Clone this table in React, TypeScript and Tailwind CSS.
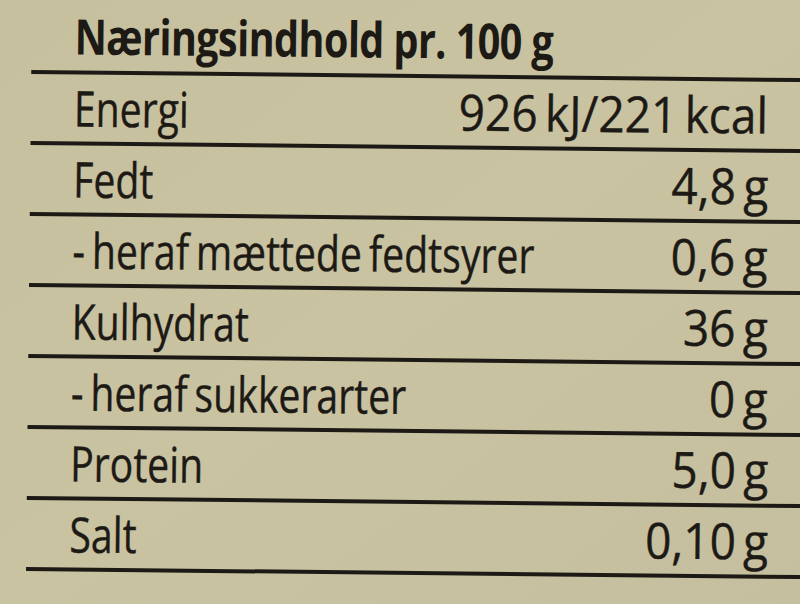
import React from 'react';

const ROWS: { label: string; value: string }[] = [
    { label: 'Energi', value: '926 kJ/221 kcal' },
    { label: 'Fedt', value: '4,8 g' },
    { label: '- heraf mættede fedtsyrer', value: '0,6 g' },
    { label: 'Kulhydrat', value: '36 g' },
    { label: '- heraf sukkerarter', value: '0 g' },
    { label: 'Protein', value: '5,0 g' },
    { label: 'Salt', value: '0,10 g' },
];

const App: React.FC = () => {
    return (
        <div
            className="w-[800px] h-[604px] overflow-hidden bg-gradient-to-br from-[#c6c09f] via-[#c9c3a2] to-[#c5bf9f] text-[#1d1a15]"
            style={{ fontFamily: '"Open Sans", "Noto Sans", sans-serif' }}
        >
            <div className="ml-[32px] w-[800px] pt-[10px] origin-top-left rotate-[0.6deg]">
                <div className="h-[64px] border-b-4 border-[#1d1a15] pl-[43px] flex items-end">
                    <h1 className="inline-block text-[49px] font-bold leading-none pb-[10px] origin-left scale-x-[0.81] tracking-[-0.8px] whitespace-nowrap">
                        Næringsindhold pr. 100 g
                    </h1>
                </div>
                {ROWS.map((row, i) => (
                    <div
                        key={row.label}
                        className="h-[71px] border-b-4 border-[#1d1a15] pl-[43px] flex items-end justify-between"
                        style={{ paddingRight: 63 - i * 0.8 }}
                    >
                        <span className="inline-block text-[49px] leading-none pb-[9px] origin-left scale-x-[0.8] whitespace-nowrap [word-spacing:-4px] [-webkit-text-stroke:0.4px_#1d1a15]">
                            {row.label}
                        </span>
                        <span className="inline-block text-[50px] leading-none pb-[9px] origin-right scale-x-[0.92] whitespace-nowrap [word-spacing:-5px] [-webkit-text-stroke:0.4px_#1d1a15]">
                            {row.value}
                        </span>
                    </div>
                ))}
            </div>
        </div>
    );
};

export default App;
